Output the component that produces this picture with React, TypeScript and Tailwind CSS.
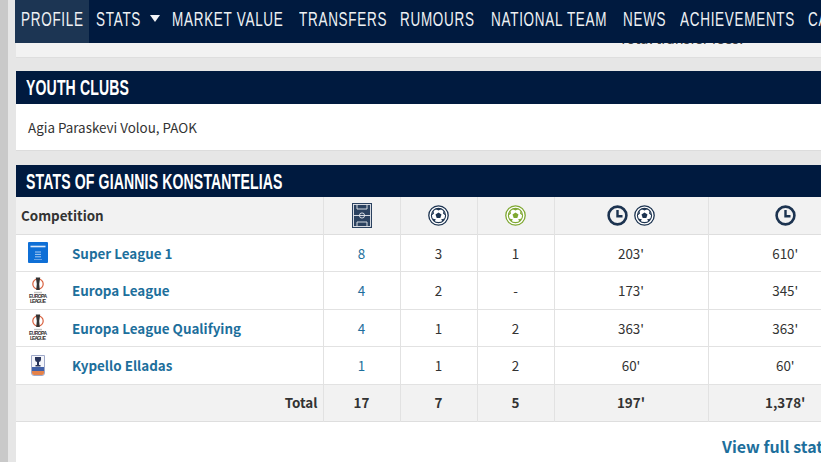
import React from "react";

const display = "font-['Liberation_Sans',sans-serif]";

function Pitch() {
  return (
    <svg width="20" height="25" viewBox="0 0 20 25" fill="none">
      <rect x="0.5" y="0.5" width="19" height="24" fill="#2b4260" stroke="#2b4260" />
      <g stroke="#e8ebef" strokeWidth="0.9">
        <rect x="1.5" y="1.5" width="17" height="22" />
        <path d="M1.5 12.5H18.5" />
        <circle cx="10" cy="12.5" r="2.6" />
        <path d="M5 1.5V6H15V1.5M5 23.5V19H15V23.5" />
      </g>
    </svg>
  );
}

function Ball({ color, size = 21 }: { color: string; size?: number }) {
  return (
    <svg width={size} height={size} viewBox="0 0 21 21" fill="none">
      <circle cx="10.5" cy="10.5" r="9.7" fill="#fff" stroke={color} strokeWidth="1.3" />
      <circle cx="10.5" cy="10.5" r="7.1" stroke={color} strokeWidth="1.1" />
      <path d="M10.5 7.4 13.5 9.6 12.3 13.1H8.7L7.5 9.6Z" fill={color} />
      <path d="M7.4 4 10.5 5.4 13.6 4 10.5 3.2ZM3.6 10.4 6 8.4 5.2 5.2ZM17.4 10.4 15 8.4 15.8 5.2ZM6.2 16.4 8 14.4 4.4 13.6ZM14.8 16.4 13 14.4 16.6 13.6Z" fill={color} />
    </svg>
  );
}

function Clock() {
  return (
    <svg width="21" height="21" viewBox="0 0 21 21" fill="none">
      <circle cx="10.5" cy="10.5" r="8.9" stroke="#1c3350" strokeWidth="2.6" />
      <path d="M10.5 5V11.2H15.5" stroke="#1c3350" strokeWidth="2.4" />
    </svg>
  );
}

function SuperLeague() {
  return (
    <svg width="20" height="21" viewBox="0 0 20 21">
      <rect width="20" height="21" rx="1" fill="#0f6fd6" />
      <path d="M2.5 4.5H17.5" stroke="#dce9fa" strokeWidth="1.6" />
      <path d="M7 10H13M7 12.4H13M7 14.8H13" stroke="#a9cbf2" strokeWidth="1" />
      <path d="M6 17.5H14" stroke="#7fb1ea" strokeWidth="0.8" />
    </svg>
  );
}

function Europa() {
  return (
    <svg width="20" height="27" viewBox="0 0 20 27" fill="none">
      <circle cx="10" cy="7" r="5.2" stroke="#d8613f" strokeWidth="1.2" />
      <path d="M7.8 0.5H12.2L11.2 7 11.8 13H8.2L8.8 7Z" fill="#333" />
      <path d="M6 15.5H14" stroke="#c4c4c4" strokeWidth="1.4" />
      <text x="10" y="21" textAnchor="middle" fontSize="5" fontWeight="700" fill="#333" fontFamily="Liberation Sans, sans-serif" textLength="18">EUROPA</text>
      <text x="10" y="26" textAnchor="middle" fontSize="5" fontWeight="700" fill="#333" fontFamily="Liberation Sans, sans-serif" textLength="16">LEAGUE</text>
    </svg>
  );
}

function Cup() {
  return (
    <svg width="14" height="21" viewBox="0 0 14 21">
      <path d="M0.5 0.5H13.5V18Q13.5 20.5 11 20.5H3Q0.5 20.5 0.5 18Z" fill="#f4f5fa" stroke="#9fa9c9" />
      <path d="M4 2V4.5Q4 6.5 6 7V10H4.5V11.5H9.5V10H8V7Q10 6.5 10 4.5V2Z" fill="#28345a" />
      <rect x="1" y="12" width="12" height="4" fill="#3f5fa6" />
      <path d="M1 16H13V18Q13 20 11 20H3Q1 20 1 18Z" fill="#e4824a" />
    </svg>
  );
}

function Condensed({ children }: { children: React.ReactNode }) {
  return <span className="inline-block origin-left scale-x-[0.643]">{children}</span>;
}

const navItems = [
  { t: "MARKET VALUE", w: "w-[127px]" },
  { t: "TRANSFERS", w: "w-[101px]" },
  { t: "RUMOURS", w: "w-[91px]" },
  { t: "NATIONAL TEAM", w: "w-[132px]" },
  { t: "NEWS", w: "w-[57px]" },
  { t: "ACHIEVEMENTS", w: "w-[128px]" },
  { t: "CAREER", w: "w-[80px]" },
];

const rows = [
  { logo: <SuperLeague />, name: "Super League 1", v: ["8", "3", "1", "203'", "610'"] },
  { logo: <Europa />, name: "Europa League", v: ["4", "2", "-", "173'", "345'"] },
  { logo: <Europa />, name: "Europa League Qualifying", v: ["4", "1", "2", "363'", "363'"] },
  { logo: <Cup />, name: "Kypello Elladas", v: ["1", "1", "2", "60'", "60'"] },
];

const cell = "border-l border-[#e2e2e2] text-center";

export default function App() {
  return (
    <div className="h-[462px] w-[821px] overflow-hidden bg-[#e6e6e6] font-['Noto_Sans_CJK_SC','Noto_Sans',sans-serif] flex">
      <div className="w-2 shrink-0 bg-[#c9c9c9]" />
      <div className="w-[813px] pl-[7px]">
        <nav className={`h-[43px] flex whitespace-nowrap overflow-hidden bg-[#001a3f] text-[#eef1f4] text-[21px] leading-[38px] tracking-[1.1px] ${display}`}>
          <a className="h-full w-[74px] shrink-0 bg-[#1c3553] pl-[6px]"><Condensed>PROFILE</Condensed></a>
          <a className="shrink-0 w-[76.5px] pl-[7px] flex items-start">
            <span className="w-[54px] shrink-0"><Condensed>STATS</Condensed></span>
            <svg width="10" height="7" viewBox="0 0 10 7" className="mt-[15px] shrink-0"><path d="M0 0H10L5 7Z" fill="#f2f4f7" /></svg>
          </a>
          {navItems.map((n) => (
            <a key={n.t} className={`${n.w} shrink-0 pl-[6.5px]`}><Condensed>{n.t}</Condensed></a>
          ))}
        </nav>
        <div className="ml-px h-[15px] bg-[#f2f2f2] border-b border-[#dedede] overflow-hidden pl-[603px]">
          <div className="-mt-[13px] text-[14.5px] leading-[16px] text-[#444] whitespace-nowrap">Total transfer fees:</div>
        </div>

        <section className="ml-px mt-[13px] bg-white border-b border-[#dcdcdc]">
          <h2 className={`h-[33px] bg-[#001a3f] pl-[10px] text-white text-[22px] leading-[33px] font-bold tracking-[0.2px] whitespace-nowrap ${display}`}><span className="inline-block origin-left scale-x-[0.64]">YOUTH CLUBS</span></h2>
          <p className="h-[46px] pl-[12px] text-[13.4px] leading-[46px] text-[#333]">Agia Paraskevi Volou, PAOK</p>
        </section>

        <section className="ml-px mt-[14px] bg-white h-[300px] overflow-hidden">
          <h2 className={`h-[32px] bg-[#001a3f] pl-[10px] text-white text-[22px] leading-[33px] font-bold tracking-[0.2px] whitespace-nowrap ${display}`}><span className="inline-block origin-left scale-x-[0.64]">STATS OF GIANNIS KONSTANTELIAS</span></h2>
          <table className="table-fixed w-[846px] border-collapse text-[13.4px] text-[#333]">
            <colgroup>
              <col className="w-[307px]" />
              <col className="w-[77px]" />
              <col className="w-[77px]" />
              <col className="w-[77px]" />
              <col className="w-[154px]" />
              <col className="w-[154px]" />
            </colgroup>
            <thead>
              <tr className="h-[37px] bg-[#f2f2f2] border-b border-[#dedede]">
                <th className="text-left pl-[5px] font-semibold">Competition</th>
                <th className={cell}><div className="flex justify-center"><Pitch /></div></th>
                <th className={cell}><div className="flex justify-center"><Ball color="#1c3350" /></div></th>
                <th className={cell}><div className="flex justify-center"><Ball color="#7fa832" /></div></th>
                <th className={cell}><div className="flex justify-center gap-[6px]"><Clock /><Ball color="#1c3350" /></div></th>
                <th className={cell}><div className="flex justify-center"><Clock /></div></th>
              </tr>
            </thead>
            <tbody>
              {rows.map((r) => (
                <tr key={r.name} className="h-[37.5px] border-b border-[#e2e2e2]">
                  <td className="p-0">
                    <div className="flex items-center">
                      <div className="w-[56px] flex justify-center pr-[12px] shrink-0">{r.logo}</div>
                      <a className="font-semibold text-[#1d6f9c] whitespace-nowrap">{r.name}</a>
                    </div>
                  </td>
                  <td className={`${cell} text-[#1d6f9c]`}>{r.v[0]}</td>
                  {r.v.slice(1).map((x, i) => (
                    <td key={i} className={cell}>{x}</td>
                  ))}
                </tr>
              ))}
              <tr className="h-[37px] bg-[#f2f2f2] border-b border-[#dedede] font-bold">
                <td className="text-right pr-[5px]">Total</td>
                <td className={cell}>17</td>
                <td className={cell}>7</td>
                <td className={cell}>5</td>
                <td className={cell}>197'</td>
                <td className={cell}>1,378'</td>
              </tr>
            </tbody>
          </table>
          <div className="whitespace-nowrap pl-[706px] pt-[14px] text-[16px] leading-[20px] font-bold text-[#1d6f9c]">View full stats</div>
        </section>
      </div>
    </div>
  );
}
